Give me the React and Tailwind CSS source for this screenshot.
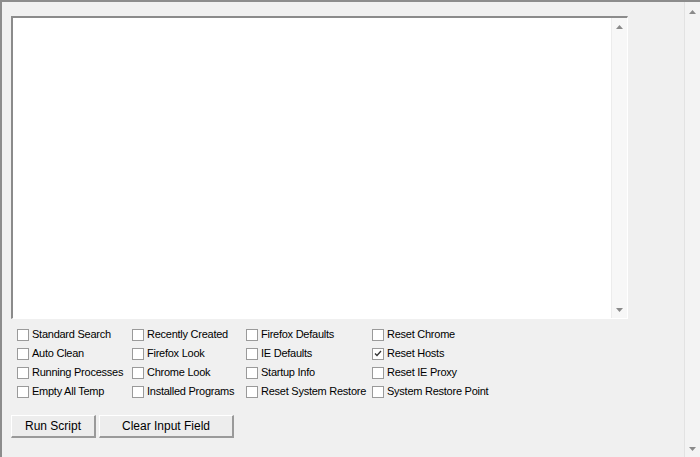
import { useState } from 'react';

const columns = [
    { width: 'w-[115px]', items: ['Standard Search', 'Auto Clean', 'Running Processes', 'Empty All Temp'] },
    { width: 'w-[114px]', items: ['Recently Created', 'Firefox Look', 'Chrome Look', 'Installed Programs'] },
    { width: 'w-[126px]', items: ['Firefox Defaults', 'IE Defaults', 'Startup Info', 'Reset System Restore'] },
    { width: 'w-[130px]', items: ['Reset Chrome', 'Reset Hosts', 'Reset IE Proxy', 'System Restore Point'] },
];

const ArrowUp = () => (
    <svg width="7" height="4" viewBox="0 0 7 4"><path d="M3.5 0 L7 4 L0 4 Z" fill="#8a8a8a" /></svg>
);

const ArrowDown = () => (
    <svg width="7" height="4" viewBox="0 0 7 4"><path d="M0 0 L7 0 L3.5 4 Z" fill="#8a8a8a" /></svg>
);

const ScrollBar = ({ className }) => (
    <div className={`flex flex-col items-center justify-between ${className}`}>
        <div className="h-[17px] flex items-center justify-center"><ArrowUp /></div>
        <div className="h-[17px] flex items-center justify-center"><ArrowDown /></div>
    </div>
);

const Check = ({ label, checked, onToggle }) => (
    <label className="flex items-center h-[19px] cursor-default select-none">
        <span
            onClick={onToggle}
            className="w-[12px] h-[12px] mr-[3px] border border-[#9a9a9a] bg-white flex items-center justify-center shrink-0"
        >
            {checked && (
                <svg width="8" height="7" viewBox="0 0 8 7">
                    <path d="M1 3.5 L3 5.5 L7 1" stroke="#333" strokeWidth="1.3" fill="none" />
                </svg>
            )}
        </span>
        <span className="whitespace-nowrap tracking-[-0.25px]">{label}</span>
    </label>
);

const App = () => {
    const [checked, setChecked] = useState({ 'Reset Hosts': true });
    const toggle = (name) => setChecked((c) => ({ ...c, [name]: !c[name] }));

    return (
        <div
            className="w-[700px] h-[457px] bg-[#f0f0f0] border-t-2 border-l-2 border-[#8c8c8c] flex overflow-hidden text-black"
            style={{ fontFamily: '"Liberation Sans", Arial, sans-serif' }}
        >
            <div className="flex-1 flex flex-col pl-[9px] pt-[14px]">
                {/* Input field */}
                <div className="w-[617px] h-[303px] border-t-2 border-l-2 border-[#8b8b8b] border-r border-b border-r-white border-b-white bg-white flex">
                    <textarea className="flex-1 resize-none outline-none bg-white" />
                    <ScrollBar className="w-[16px] bg-[#f7f7f7] border-l border-[#ececec]" />
                </div>

                {/* Options */}
                <div className="flex pl-[6px] pt-[6px] text-[11px]">
                    {columns.map((col, i) => (
                        <div key={i} className={`${col.width} flex flex-col`}>
                            {col.items.map((name) => (
                                <Check key={name} label={name} checked={!!checked[name]} onToggle={() => toggle(name)} />
                            ))}
                        </div>
                    ))}
                </div>

                {/* Buttons */}
                <div className="flex gap-[3px] mt-[14px] text-[12px]">
                    <button className="w-[85px] h-[23px] bg-[#ededed] border-t border-l border-t-white border-l-white border-b-2 border-r-2 border-b-[#9a9a9a] border-r-[#9a9a9a]">
                        Run Script
                    </button>
                    <button className="w-[135px] h-[23px] bg-[#ededed] border-t border-l border-t-white border-l-white border-b-2 border-r-2 border-b-[#9a9a9a] border-r-[#9a9a9a]">
                        Clear Input Field
                    </button>
                </div>
            </div>

            {/* Window scrollbar */}
            <ScrollBar className="w-[16px] bg-[#f3f3f3] border-l border-[#e2e2e2] pt-[1px]" />
        </div>
    );
};

export default App;
